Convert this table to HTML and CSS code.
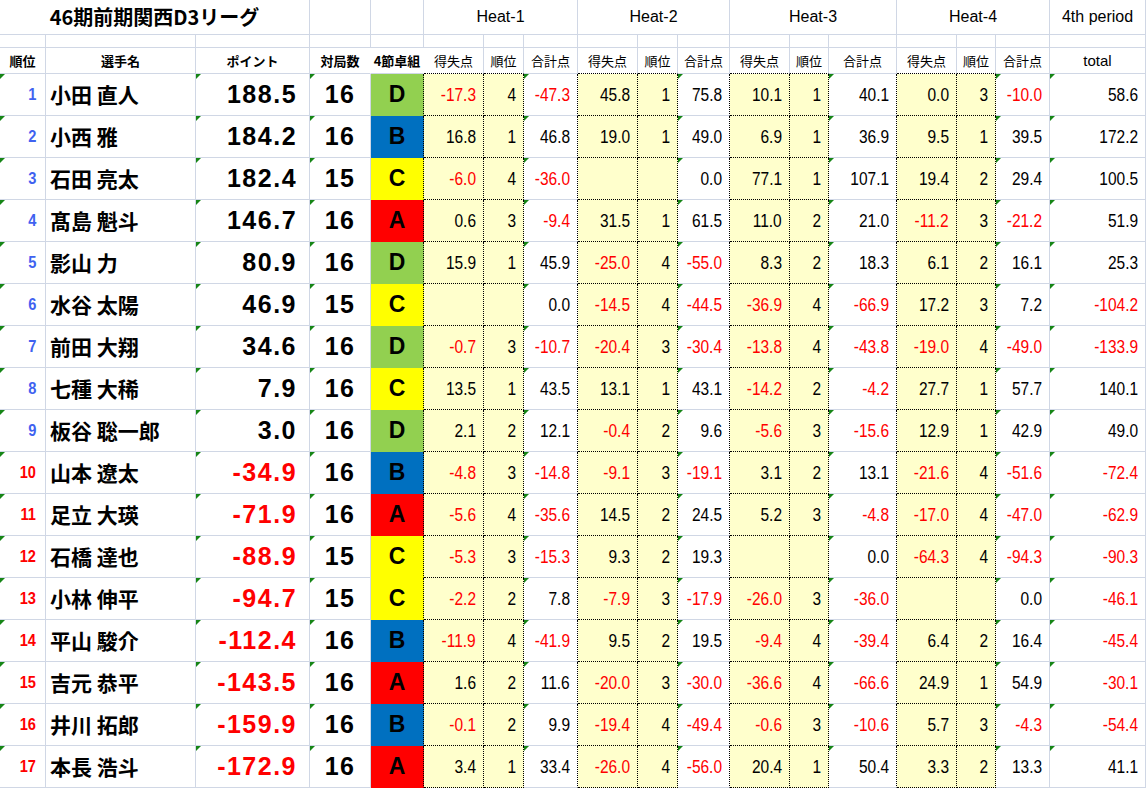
FILE: index.html
```html
<!DOCTYPE html>
<html lang="ja">
<head>
<meta charset="utf-8">
<title>46期前期関西D3リーグ</title>
<link rel="stylesheet" href="styles.css">
</head>
<body>
<table class="sheet">
<colgroup>
<col style="width:46px"><col style="width:150px"><col style="width:114px"><col style="width:61px"><col style="width:53px">
<col style="width:60px"><col style="width:40px"><col style="width:54px">
<col style="width:60px"><col style="width:40px"><col style="width:52px">
<col style="width:60px"><col style="width:39px"><col style="width:68px">
<col style="width:60px"><col style="width:39px"><col style="width:54px">
<col style="width:96px">
</colgroup>
<tr class="title">
<td class="ttl" colspan="3">46期前期関西D3リーグ</td><td></td><td></td>
<td class="heat" colspan="3">Heat-1</td><td class="heat" colspan="3">Heat-2</td><td class="heat" colspan="3">Heat-3</td><td class="heat" colspan="3">Heat-4</td>
<td class="heat">4th period</td>
</tr>
<tr class="blank"><td></td><td></td><td></td><td></td><td></td><td></td><td></td><td></td><td></td><td></td><td></td><td></td><td></td><td></td><td></td><td></td><td></td><td></td></tr>
<tr class="head">
<td class="hb">順位</td><td class="hb">選手名</td><td class="hb">ポイント</td><td class="hb nr">対局数</td><td class="hb nr">4節卓組</td>
<td class="hs hy">得失点</td><td class="hs hy">順位</td><td class="hs">合計点</td>
<td class="hs hy">得失点</td><td class="hs hy">順位</td><td class="hs">合計点</td>
<td class="hs hy">得失点</td><td class="hs hy">順位</td><td class="hs">合計点</td>
<td class="hs hy">得失点</td><td class="hs hy">順位</td><td class="hs">合計点</td>
<td class="ht">total</td>
</tr>

<tr class="d"><td class="r b tri"><span class="n">1</span></td><td class="nm">小田 直人</td><td class="pt tri">188.5</td><td class="gm tri">16</td><td class="g gD">D</td>
<td class="y m"><span class="n">-17.3</span></td><td class="y"><span class="n">4</span></td><td class="s tri m"><span class="n">-47.3</span></td>
<td class="y"><span class="n">45.8</span></td><td class="y"><span class="n">1</span></td><td class="s tri"><span class="n">75.8</span></td>
<td class="y"><span class="n">10.1</span></td><td class="y"><span class="n">1</span></td><td class="s tri"><span class="n">40.1</span></td>
<td class="y"><span class="n">0.0</span></td><td class="y"><span class="n">3</span></td><td class="s s4 tri m"><span class="n">-10.0</span></td>
<td class="t tri"><span class="n">58.6</span></td></tr>

<tr class="d"><td class="r b tri"><span class="n">2</span></td><td class="nm">小西 雅</td><td class="pt tri">184.2</td><td class="gm tri">16</td><td class="g gB">B</td>
<td class="y"><span class="n">16.8</span></td><td class="y"><span class="n">1</span></td><td class="s tri"><span class="n">46.8</span></td>
<td class="y"><span class="n">19.0</span></td><td class="y"><span class="n">1</span></td><td class="s tri"><span class="n">49.0</span></td>
<td class="y"><span class="n">6.9</span></td><td class="y"><span class="n">1</span></td><td class="s tri"><span class="n">36.9</span></td>
<td class="y"><span class="n">9.5</span></td><td class="y"><span class="n">1</span></td><td class="s s4 tri"><span class="n">39.5</span></td>
<td class="t tri"><span class="n">172.2</span></td></tr>

<tr class="d"><td class="r b tri"><span class="n">3</span></td><td class="nm">石田 亮太</td><td class="pt tri">182.4</td><td class="gm tri">15</td><td class="g gC">C</td>
<td class="y m"><span class="n">-6.0</span></td><td class="y"><span class="n">4</span></td><td class="s tri m"><span class="n">-36.0</span></td>
<td class="y"></td><td class="y"></td><td class="s tri"><span class="n">0.0</span></td>
<td class="y"><span class="n">77.1</span></td><td class="y"><span class="n">1</span></td><td class="s tri"><span class="n">107.1</span></td>
<td class="y"><span class="n">19.4</span></td><td class="y"><span class="n">2</span></td><td class="s s4 tri"><span class="n">29.4</span></td>
<td class="t tri"><span class="n">100.5</span></td></tr>

<tr class="d"><td class="r b tri"><span class="n">4</span></td><td class="nm">髙島 魁斗</td><td class="pt tri">146.7</td><td class="gm tri">16</td><td class="g gA">A</td>
<td class="y"><span class="n">0.6</span></td><td class="y"><span class="n">3</span></td><td class="s tri m"><span class="n">-9.4</span></td>
<td class="y"><span class="n">31.5</span></td><td class="y"><span class="n">1</span></td><td class="s tri"><span class="n">61.5</span></td>
<td class="y"><span class="n">11.0</span></td><td class="y"><span class="n">2</span></td><td class="s tri"><span class="n">21.0</span></td>
<td class="y m"><span class="n">-11.2</span></td><td class="y"><span class="n">3</span></td><td class="s s4 tri m"><span class="n">-21.2</span></td>
<td class="t tri"><span class="n">51.9</span></td></tr>

<tr class="d"><td class="r b tri"><span class="n">5</span></td><td class="nm">影山 力</td><td class="pt tri">80.9</td><td class="gm tri">16</td><td class="g gD">D</td>
<td class="y"><span class="n">15.9</span></td><td class="y"><span class="n">1</span></td><td class="s tri"><span class="n">45.9</span></td>
<td class="y m"><span class="n">-25.0</span></td><td class="y"><span class="n">4</span></td><td class="s tri m"><span class="n">-55.0</span></td>
<td class="y"><span class="n">8.3</span></td><td class="y"><span class="n">2</span></td><td class="s tri"><span class="n">18.3</span></td>
<td class="y"><span class="n">6.1</span></td><td class="y"><span class="n">2</span></td><td class="s s4 tri"><span class="n">16.1</span></td>
<td class="t tri"><span class="n">25.3</span></td></tr>

<tr class="d"><td class="r b tri"><span class="n">6</span></td><td class="nm">水谷 太陽</td><td class="pt tri">46.9</td><td class="gm tri">15</td><td class="g gC">C</td>
<td class="y"></td><td class="y"></td><td class="s tri"><span class="n">0.0</span></td>
<td class="y m"><span class="n">-14.5</span></td><td class="y"><span class="n">4</span></td><td class="s tri m"><span class="n">-44.5</span></td>
<td class="y m"><span class="n">-36.9</span></td><td class="y"><span class="n">4</span></td><td class="s tri m"><span class="n">-66.9</span></td>
<td class="y"><span class="n">17.2</span></td><td class="y"><span class="n">3</span></td><td class="s s4 tri"><span class="n">7.2</span></td>
<td class="t tri m"><span class="n">-104.2</span></td></tr>

<tr class="d"><td class="r b tri"><span class="n">7</span></td><td class="nm">前田 大翔</td><td class="pt tri">34.6</td><td class="gm tri">16</td><td class="g gD">D</td>
<td class="y m"><span class="n">-0.7</span></td><td class="y"><span class="n">3</span></td><td class="s tri m"><span class="n">-10.7</span></td>
<td class="y m"><span class="n">-20.4</span></td><td class="y"><span class="n">3</span></td><td class="s tri m"><span class="n">-30.4</span></td>
<td class="y m"><span class="n">-13.8</span></td><td class="y"><span class="n">4</span></td><td class="s tri m"><span class="n">-43.8</span></td>
<td class="y m"><span class="n">-19.0</span></td><td class="y"><span class="n">4</span></td><td class="s s4 tri m"><span class="n">-49.0</span></td>
<td class="t tri m"><span class="n">-133.9</span></td></tr>

<tr class="d"><td class="r b tri"><span class="n">8</span></td><td class="nm">七種 大稀</td><td class="pt tri">7.9</td><td class="gm tri">16</td><td class="g gC">C</td>
<td class="y"><span class="n">13.5</span></td><td class="y"><span class="n">1</span></td><td class="s tri"><span class="n">43.5</span></td>
<td class="y"><span class="n">13.1</span></td><td class="y"><span class="n">1</span></td><td class="s tri"><span class="n">43.1</span></td>
<td class="y m"><span class="n">-14.2</span></td><td class="y"><span class="n">2</span></td><td class="s tri m"><span class="n">-4.2</span></td>
<td class="y"><span class="n">27.7</span></td><td class="y"><span class="n">1</span></td><td class="s s4 tri"><span class="n">57.7</span></td>
<td class="t tri"><span class="n">140.1</span></td></tr>

<tr class="d"><td class="r b tri"><span class="n">9</span></td><td class="nm">板谷 聡一郎</td><td class="pt tri">3.0</td><td class="gm tri">16</td><td class="g gD">D</td>
<td class="y"><span class="n">2.1</span></td><td class="y"><span class="n">2</span></td><td class="s tri"><span class="n">12.1</span></td>
<td class="y m"><span class="n">-0.4</span></td><td class="y"><span class="n">2</span></td><td class="s tri"><span class="n">9.6</span></td>
<td class="y m"><span class="n">-5.6</span></td><td class="y"><span class="n">3</span></td><td class="s tri m"><span class="n">-15.6</span></td>
<td class="y"><span class="n">12.9</span></td><td class="y"><span class="n">1</span></td><td class="s s4 tri"><span class="n">42.9</span></td>
<td class="t tri"><span class="n">49.0</span></td></tr>

<tr class="d"><td class="r rd tri"><span class="n">10</span></td><td class="nm">山本 遼太</td><td class="pt tri m">-34.9</td><td class="gm tri">16</td><td class="g gB">B</td>
<td class="y m"><span class="n">-4.8</span></td><td class="y"><span class="n">3</span></td><td class="s tri m"><span class="n">-14.8</span></td>
<td class="y m"><span class="n">-9.1</span></td><td class="y"><span class="n">3</span></td><td class="s tri m"><span class="n">-19.1</span></td>
<td class="y"><span class="n">3.1</span></td><td class="y"><span class="n">2</span></td><td class="s tri"><span class="n">13.1</span></td>
<td class="y m"><span class="n">-21.6</span></td><td class="y"><span class="n">4</span></td><td class="s s4 tri m"><span class="n">-51.6</span></td>
<td class="t tri m"><span class="n">-72.4</span></td></tr>

<tr class="d"><td class="r rd tri"><span class="n">11</span></td><td class="nm">足立 大瑛</td><td class="pt tri m">-71.9</td><td class="gm tri">16</td><td class="g gA">A</td>
<td class="y m"><span class="n">-5.6</span></td><td class="y"><span class="n">4</span></td><td class="s tri m"><span class="n">-35.6</span></td>
<td class="y"><span class="n">14.5</span></td><td class="y"><span class="n">2</span></td><td class="s tri"><span class="n">24.5</span></td>
<td class="y"><span class="n">5.2</span></td><td class="y"><span class="n">3</span></td><td class="s tri m"><span class="n">-4.8</span></td>
<td class="y m"><span class="n">-17.0</span></td><td class="y"><span class="n">4</span></td><td class="s s4 tri m"><span class="n">-47.0</span></td>
<td class="t tri m"><span class="n">-62.9</span></td></tr>

<tr class="d"><td class="r rd tri"><span class="n">12</span></td><td class="nm">石橋 達也</td><td class="pt tri m">-88.9</td><td class="gm tri">15</td><td class="g gC">C</td>
<td class="y m"><span class="n">-5.3</span></td><td class="y"><span class="n">3</span></td><td class="s tri m"><span class="n">-15.3</span></td>
<td class="y"><span class="n">9.3</span></td><td class="y"><span class="n">2</span></td><td class="s tri"><span class="n">19.3</span></td>
<td class="y"></td><td class="y"></td><td class="s tri"><span class="n">0.0</span></td>
<td class="y m"><span class="n">-64.3</span></td><td class="y"><span class="n">4</span></td><td class="s s4 tri m"><span class="n">-94.3</span></td>
<td class="t tri m"><span class="n">-90.3</span></td></tr>

<tr class="d"><td class="r rd tri"><span class="n">13</span></td><td class="nm">小林 伸平</td><td class="pt tri m">-94.7</td><td class="gm tri">15</td><td class="g gC">C</td>
<td class="y m"><span class="n">-2.2</span></td><td class="y"><span class="n">2</span></td><td class="s tri"><span class="n">7.8</span></td>
<td class="y m"><span class="n">-7.9</span></td><td class="y"><span class="n">3</span></td><td class="s tri m"><span class="n">-17.9</span></td>
<td class="y m"><span class="n">-26.0</span></td><td class="y"><span class="n">3</span></td><td class="s tri m"><span class="n">-36.0</span></td>
<td class="y"></td><td class="y"></td><td class="s s4 tri"><span class="n">0.0</span></td>
<td class="t tri m"><span class="n">-46.1</span></td></tr>

<tr class="d"><td class="r rd tri"><span class="n">14</span></td><td class="nm">平山 駿介</td><td class="pt tri m">-112.4</td><td class="gm tri">16</td><td class="g gB">B</td>
<td class="y m"><span class="n">-11.9</span></td><td class="y"><span class="n">4</span></td><td class="s tri m"><span class="n">-41.9</span></td>
<td class="y"><span class="n">9.5</span></td><td class="y"><span class="n">2</span></td><td class="s tri"><span class="n">19.5</span></td>
<td class="y m"><span class="n">-9.4</span></td><td class="y"><span class="n">4</span></td><td class="s tri m"><span class="n">-39.4</span></td>
<td class="y"><span class="n">6.4</span></td><td class="y"><span class="n">2</span></td><td class="s s4 tri"><span class="n">16.4</span></td>
<td class="t tri m"><span class="n">-45.4</span></td></tr>

<tr class="d"><td class="r rd tri"><span class="n">15</span></td><td class="nm">吉元 恭平</td><td class="pt tri m">-143.5</td><td class="gm tri">16</td><td class="g gA">A</td>
<td class="y"><span class="n">1.6</span></td><td class="y"><span class="n">2</span></td><td class="s tri"><span class="n">11.6</span></td>
<td class="y m"><span class="n">-20.0</span></td><td class="y"><span class="n">3</span></td><td class="s tri m"><span class="n">-30.0</span></td>
<td class="y m"><span class="n">-36.6</span></td><td class="y"><span class="n">4</span></td><td class="s tri m"><span class="n">-66.6</span></td>
<td class="y"><span class="n">24.9</span></td><td class="y"><span class="n">1</span></td><td class="s s4 tri"><span class="n">54.9</span></td>
<td class="t tri m"><span class="n">-30.1</span></td></tr>

<tr class="d"><td class="r rd tri"><span class="n">16</span></td><td class="nm">井川 拓郎</td><td class="pt tri m">-159.9</td><td class="gm tri">16</td><td class="g gB">B</td>
<td class="y m"><span class="n">-0.1</span></td><td class="y"><span class="n">2</span></td><td class="s tri"><span class="n">9.9</span></td>
<td class="y m"><span class="n">-19.4</span></td><td class="y"><span class="n">4</span></td><td class="s tri m"><span class="n">-49.4</span></td>
<td class="y m"><span class="n">-0.6</span></td><td class="y"><span class="n">3</span></td><td class="s tri m"><span class="n">-10.6</span></td>
<td class="y"><span class="n">5.7</span></td><td class="y"><span class="n">3</span></td><td class="s s4 tri m"><span class="n">-4.3</span></td>
<td class="t tri m"><span class="n">-54.4</span></td></tr>

<tr class="d"><td class="r rd tri"><span class="n">17</span></td><td class="nm">本長 浩斗</td><td class="pt tri m">-172.9</td><td class="gm tri">16</td><td class="g gA">A</td>
<td class="y"><span class="n">3.4</span></td><td class="y"><span class="n">1</span></td><td class="s tri"><span class="n">33.4</span></td>
<td class="y m"><span class="n">-26.0</span></td><td class="y"><span class="n">4</span></td><td class="s tri m"><span class="n">-56.0</span></td>
<td class="y"><span class="n">20.4</span></td><td class="y"><span class="n">1</span></td><td class="s tri"><span class="n">50.4</span></td>
<td class="y"><span class="n">3.3</span></td><td class="y"><span class="n">2</span></td><td class="s s4 tri"><span class="n">13.3</span></td>
<td class="t tri"><span class="n">41.1</span></td></tr>
</table>
</body>
</html>
```
FILE: styles.css
```css
* { box-sizing: border-box; }
body {
  margin: 0;
  background: #fff;
  color: #000;
  font-family: "Liberation Sans", Arial, "Noto Sans CJK JP", sans-serif;
}
.sheet {
  border-collapse: separate;
  border-spacing: 0;
  table-layout: fixed;
  width: 1146px;
}
.sheet td {
  padding: 0;
  border-right: 1px solid #d0d7e5;
  border-bottom: 1px solid #d0d7e5;
  vertical-align: middle;
  white-space: nowrap;
  line-height: 1;
  position: relative;
  overflow: visible;
}
.sheet tr.title td { height: 35px; }
.sheet tr.blank td { height: 13px; }
.sheet tr.head td { height: 26px; }
.sheet tr.d td { height: 42px; }

.sheet .ttl {
  font-family: "Noto Sans CJK JP", sans-serif;
  font-weight: 700;
  font-size: 20px;
  text-align: center;
}
.sheet .heat { font-size: 16px; text-align: center; }
.sheet .hb {
  font-family: "Noto Sans CJK JP", sans-serif;
  font-weight: 700;
  font-size: 13px;
  text-align: center;
}
.sheet .hs {
  font-family: "Noto Sans CJK JP", sans-serif;
  font-size: 13px;
  text-align: center;
}
.sheet .ht { font-size: 15px; text-align: center; }
.sheet .hy { border-bottom: 1px dotted #000; }
.sheet .nr { border-right-color: transparent; }

.sheet .r {
  text-align: right;
  padding-right: 9px;
  font-weight: 700;
  font-size: 17px;
}
.sheet .r.b { color: #3f62f0; }
.sheet .r.rd { color: #ff0000; }
.sheet .nm {
  font-family: "Noto Sans CJK JP", sans-serif;
  font-weight: 700;
  font-size: 21px;
  padding-left: 4px;
}
.sheet .pt {
  text-align: right;
  padding-right: 12px;
  font-weight: 700;
  font-size: 25px;
  letter-spacing: 1.5px;
}
.sheet .gm {
  text-align: center;
  font-weight: 700;
  font-size: 25px;
  letter-spacing: 1.5px;
}
.sheet .g {
  text-align: center;
  font-weight: 700;
  font-size: 23px;
  border-right: 1px dotted #000;
}
.sheet .gA { background: #ff0000; border-bottom-color: #ff0000; }
.sheet .gB { background: #0070c0; border-bottom-color: #0070c0; }
.sheet .gC { background: #ffff00; border-bottom-color: #ffff00; }
.sheet .gD { background: #92d050; border-bottom-color: #92d050; }

.sheet .y {
  background: #ffffcc;
  border-right: 1px dotted #000;
  border-bottom: 1px dotted #000;
  text-align: right;
  padding-right: 7px;
  font-size: 18px;
}
.sheet .s {
  text-align: right;
  padding-right: 7px;
  font-size: 18px;
  border-right: 1px dotted #000;
}
.sheet .s.s4 { border-right: 1px solid #d0d7e5; }
.sheet .t {
  text-align: right;
  padding-right: 7px;
  font-size: 18px;
}
.sheet .m { color: #ff0000; }

.n {
  display: inline-block;
  transform: scaleX(0.86);
  transform-origin: 100% 50%;
}
.tri::before {
  content: "";
  position: absolute;
  left: 0;
  top: 0;
  border-top: 5px solid #168516;
  border-right: 5px solid transparent;
}
```
